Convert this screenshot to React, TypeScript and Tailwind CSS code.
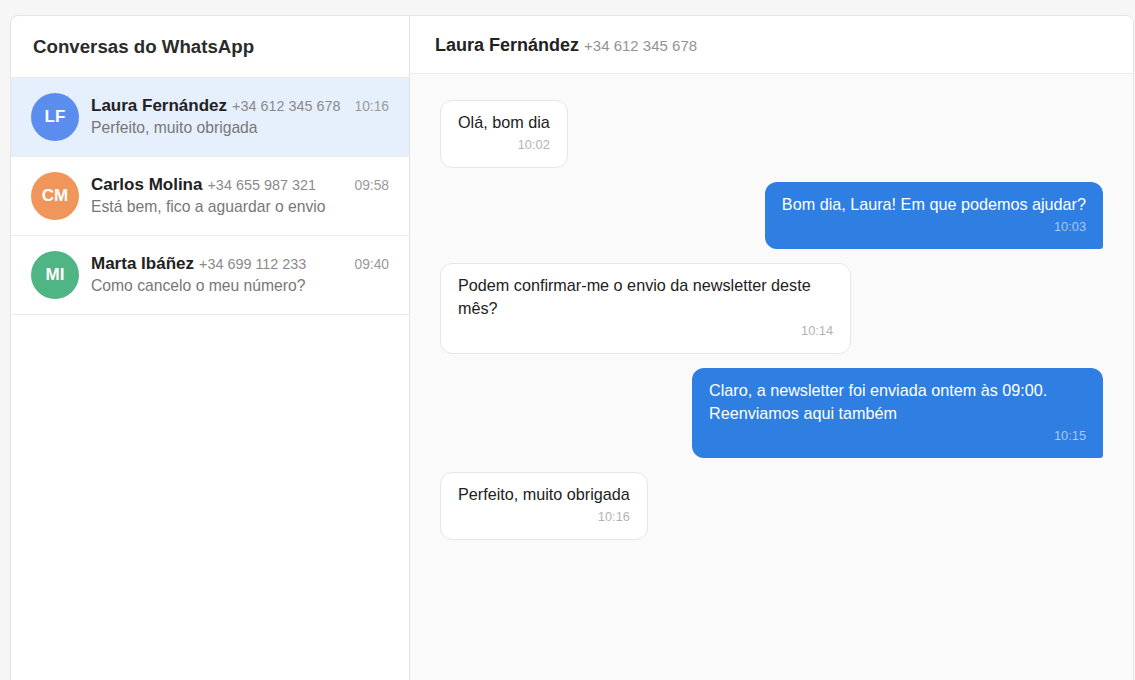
import React from "react";

type Chat = {
  id: number;
  initials: string;
  name: string;
  phone: string;
  time: string;
  preview: string;
  color: string;
};

type Message = {
  id: number;
  text: string;
  time: string;
  mine: boolean;
};

const chats: Chat[] = [
  { id: 1, initials: "LF", name: "Laura Fernández", phone: "+34 612 345 678", time: "10:16", preview: "Perfeito, muito obrigada", color: "bg-[#5b8def]" },
  { id: 2, initials: "CM", name: "Carlos Molina", phone: "+34 655 987 321", time: "09:58", preview: "Está bem, fico a aguardar o envio", color: "bg-[#f0965a]" },
  { id: 3, initials: "MI", name: "Marta Ibáñez", phone: "+34 699 112 233", time: "09:40", preview: "Como cancelo o meu número?", color: "bg-[#4fb585]" },
];

const messages: Message[] = [
  { id: 1, text: "Olá, bom dia", time: "10:02", mine: false },
  { id: 2, text: "Bom dia, Laura! Em que podemos ajudar?", time: "10:03", mine: true },
  { id: 3, text: "Podem confirmar-me o envio da newsletter deste mês?", time: "10:14", mine: false },
  { id: 4, text: "Claro, a newsletter foi enviada ontem às 09:00. Reenviamos aqui também", time: "10:15", mine: true },
  { id: 5, text: "Perfeito, muito obrigada", time: "10:16", mine: false },
];

const ChatRow = ({ chat, active }: { chat: Chat; active: boolean }) => (
  <div
    className={
      "flex items-center gap-3 px-5 h-[79px] border-b border-[#ececec] " +
      (active ? "bg-[#e6effc]" : "bg-white")
    }
  >
    <div
      className={
        "w-12 h-12 rounded-full flex items-center justify-center text-white font-bold text-[17px] shrink-0 " +
        chat.color
      }
    >
      {chat.initials}
    </div>
    <div className="flex-1 min-w-0 -mt-[2px]">
      <div className="flex items-baseline leading-[22px]">
        <span className="font-bold text-[17px] text-[#222]">{chat.name}</span>
        <span className="ml-[5px] text-[14.4px] text-[#8a8a8a]">{chat.phone}</span>
        <span className="ml-auto text-[13.8px] text-[#9a9a9a]">{chat.time}</span>
      </div>
      <div className="text-[15.7px] text-[#777] leading-5 truncate">{chat.preview}</div>
    </div>
  </div>
);

const Bubble = ({ msg }: { msg: Message }) => (
  <div className={"flex " + (msg.mine ? "justify-end" : "justify-start")}>
    <div
      className={
        "max-w-[62%] px-[17px] " +
        (msg.mine
          ? "pt-[11px] pb-[12px] bg-[#2f7ee2] text-white rounded-xl rounded-br-[3px]"
          : "pt-[10px] pb-[12px] bg-white text-[#222] border border-[#e6e6e6] rounded-xl")
      }
    >
      <div className="text-[16.2px] leading-[23px]">{msg.text}</div>
      <div
        className={
          "text-right text-[12.8px] leading-5 mt-[1px] " +
          (msg.mine ? "text-[#a9c8f2]" : "text-[#b3b3b3]")
        }
      >
        {msg.time}
      </div>
    </div>
  </div>
);

const App = () => {
  return (
    <div
      className="min-h-screen bg-[#f6f6f6] pt-[15px] pl-[10px] overflow-hidden"
      style={{ fontFamily: '"Liberation Sans", Arial, sans-serif' }}
    >
      <div className="w-[1124px] h-[700px] bg-white border border-[#e4e4e4] rounded-tl-lg rounded-tr-lg flex overflow-hidden">
        {/* lista de conversas */}
        <div className="w-[399px] shrink-0 border-r border-[#e2e2e2] flex flex-col">
          <div className="h-[62px] px-[22px] flex items-center border-b border-[#ececec]">
            <h1 className="font-bold text-[18.7px] text-[#2b2b2b] mt-[1px]">Conversas do WhatsApp</h1>
          </div>
          {chats.map((c) => (
            <ChatRow key={c.id} chat={c} active={c.id === 1} />
          ))}
        </div>

        {/* conversa aberta */}
        <div className="flex-1 flex flex-col bg-[#fafafa]">
          <div className="h-[58px] bg-white border-b border-[#ececec] flex items-center px-[25px]">
            <div className="flex items-baseline mt-[1px]">
              <span className="font-bold text-[18px] text-[#222]">Laura Fernández</span>
              <span className="ml-[5px] text-[15px] text-[#939393]">+34 612 345 678</span>
            </div>
          </div>
          <div className="flex flex-col gap-[14px] pl-[30px] pr-[30px] pt-[26px]">
            {messages.map((m) => (
              <Bubble key={m.id} msg={m} />
            ))}
          </div>
        </div>
      </div>
    </div>
  );
};

export default App;
